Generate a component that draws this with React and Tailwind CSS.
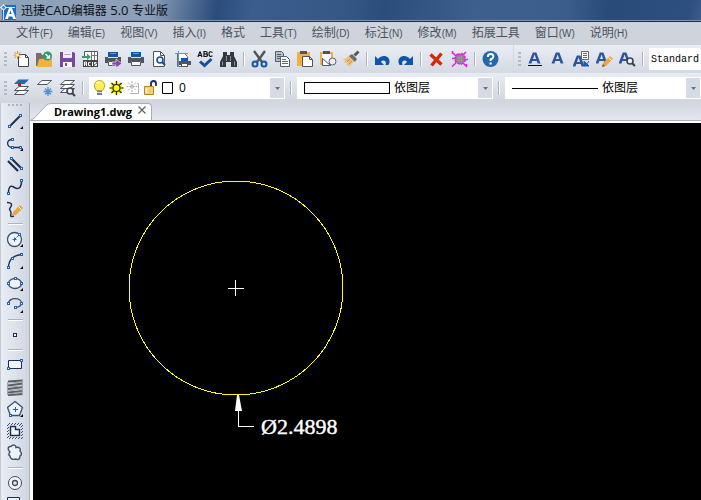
import React from "react";

const INK = "#1f2f4f";
const BLUE = "#1f66b8";

function Svg({ children, className = "" }) {
  return (
    <svg aria-hidden="true" width="17" height="18" viewBox="0 0 17 18" fill="none" className={`shrink-0 ${className}`}>
      {children}
    </svg>
  );
}

function Node({ x, y }) {
  return <rect x={x - 1} y={y - 1} width="2" height="2" fill="#fff" stroke={BLUE} shapeRendering="crispEdges" />;
}

const Flyout = () => <path d="M16 14v3h-3z" fill="#000" />;
const Glyph = ({ x = 0, y = 0 }) => (
  <path
    transform={`translate(${x} ${y})`}
    d="M1.500 13.500 5.800 2.500H9.400L13.500 13.500H10.600L9.800 11H5.300L4.500 13.500ZM6 8.900H9.100L7.600 4.600Z"
    fill="#2c56a0"
  />
);
const Pencil = () => (
  <g>
    <path d="M6 17l1-4 7-7 3 3-7 7z" fill="#f0a63c" />
    <path d="M12.500 7.500l3 3" stroke="#fff" />
    <path d="M6 17l1-3 2 2z" fill="#7a5a30" />
  </g>
);
const Printer = () => (
  <g>
    <path d="M3 2h10v5H3z" fill="#0f59a8" />
    <path d="M5 3.500h6" stroke="#5d96d0" />
    <path d="M0 7h3v1h10V7h3v6h-3v-2H3v2H0z" fill="#50545c" />
    <path d="M3.500 11.500h9v4h-9z" fill="#fff" stroke="#50545c" />
  </g>
);
const Loupe = ({ x, y, c = "#40444c" }) => (
  <g transform={`translate(${x} ${y})`}>
    <circle cx="4" cy="4" r="3" fill="#e8f1fa" stroke={c} strokeWidth="1.600" />
    <path d="M6.200 6.200L9 9" stroke={c} strokeWidth="2.200" />
  </g>
);

const FILE_TOOLS = [
  ["New", <>
    <path d="M5.500 9V4.500h7l3 3v9h-10V9" fill="#fff" stroke="#444" />
    <path d="M12.500 4.500v3h3" stroke="#444" />
    <path d="M4.500 1v8M.500 5h8M1.500 2l6 6M7.500 2l-6 6" stroke="#d99022" />
    <circle cx="4.500" cy="5" r="1.500" fill="#fff2b0" />
  </>],
  ["Open", <>
    <path d="M0 16V3h5l1 2h4v11z" fill="#767069" />
    <path d="M1 17l2-8h4l1-1h8v9z" fill="#f5b041" />
    <circle cx="11.500" cy="6" r="4.500" fill="#2a9c6c" />
    <path d="M9.500 4l4 4M13.500 5v3h-3" stroke="#fff" strokeWidth="1.300" />
  </>],
  ["Save", <>
    <path d="M1 2h13l2 1v14H1z" fill="#7a4a9a" />
    <path d="M4 2h9v6H4z" fill="#f3eef8" />
    <path d="M4 12h9v5H4z" fill="#fff" />
    <path d="M6 13h2v3H6z" fill="#7a4a9a" />
    <path d="M5.500 4.500h6" stroke="#b49ac6" />
  </>],
  ["Export ACIS", <>
    <path d="M2.500 6V1.500h13v14h-13V10" fill="#fff" stroke="#555" />
    <path d="M9.500 2v8M9.500 5.500h6M12.500 2v8" stroke="#777" />
    <path d="M0 6h5V3.500L9 7 5 10V8H0z" fill="#3c9a72" />
    <path d="M1 10h15v7H1z" fill="#444" />
    <path d="M2.500 16v-4h2v4M2.500 14h2M8.500 12.500h-2v3h2M10.500 12v4M14.500 12.500h-2v1.500h2v1.500h-2" stroke="#fff" />
  </>],
  ["Batch print", <>
    <Printer />
    <path d="M7 12h4V9l6 4.500-6 4.500v-3H7z" fill="#8b46a5" stroke="#fff" strokeWidth=".6" />
  </>],
  ["Print", <Printer />],
  ["Print preview", <>
    <path d="M2.500 1.500h7l4 4v11h-11z" fill="#fff" stroke="#555" />
    <path d="M9.500 1.500v4h4" stroke="#555" />
    <Loupe x={5} y={6} c="#1c4f96" />
  </>],
  ["Page setup", <>
    <path d="M3.500 3.500h7l3 3v10h-10z" fill="#fff" stroke="#666" />
    <path d="M1 3.500h13M4.500 1v16" stroke="#49a0c8" />
    <path d="M7 8h7v3H7z" fill="#0f59a8" />
    <path d="M5 11h12v4H5z" fill="#50545c" />
    <path d="M7.500 13.500h6v3h-6z" fill="#fff" stroke="#50545c" />
  </>],
  ["Spelling", <>
    <path d="M1 7l1.700-5h.6L5 7M1.700 5.500h2.600M7 1.500v5h1.500Q10.500 6.500 10.500 5.200 10.500 4 8.800 4 10.200 4 10.200 2.700 10.200 1.500 8.500 1.500zM7 4h2M15.500 2.500Q12 .5 12 4t3.500 1.800" stroke="#111" strokeWidth="1.200" />
    <path d="M3 11.500l4.500 4 7-6.500" stroke="#154f9f" strokeWidth="3" />
  </>],
  ["Find", <>
    <path d="M3 2h4v3h3V2h4v4l3 6v5h-6v-5H6v5H0v-5l3-6z" fill="#35383e" />
    <path d="M6.500 6v5M10.500 6v5M2.500 11.500v4M14.500 11.500v4" stroke="#8c9098" />
  </>],
];

const EDIT_TOOLS = [
  ["Cut", <>
    <path d="M3 1l8 11M14 1L6 12" stroke="#50545c" strokeWidth="2.400" />
    <circle cx="4" cy="14" r="2.500" stroke="#0f59a8" strokeWidth="2" />
    <circle cx="13" cy="14" r="2.500" stroke="#0f59a8" strokeWidth="2" />
  </>],
  ["Copy", <>
    <path d="M1.500 1.500h6l2 2v8h-8z" fill="#b7bec9" stroke="#555e6c" />
    <path d="M3 4.500h4M3 6.500h4M3 8.500h3" stroke="#555e6c" />
    <path d="M6.500 6.500h6l3 3v7h-9z" fill="#fff" stroke="#555e6c" />
    <path d="M8 9.500h4M8 11.500h6M8 13.500h6" stroke="#2574be" />
  </>],
  ["Paste", <>
    <path d="M0 2h13v14H0z" fill="#f4ae43" />
    <path d="M3 1h7v3H3z" fill="#50545c" />
    <path d="M5.500 6.500h7l3 3v7h-10z" fill="#fff" stroke="#555" />
    <path d="M12.500 6.500v3h3" stroke="#555" />
  </>],
  ["Paste as block", <>
    <path d="M0 2h13v13H0z" fill="#f4ae43" />
    <path d="M2 4h9v9H2z" fill="#f6f7fa" />
    <path d="M3 1h7v3H3z" fill="#50545c" />
    <circle cx="12.500" cy="11.500" r="3.500" fill="#e9eef8" stroke="#5a6272" />
    <path d="M2.500 15.500v-7l8 7z" fill="#fff" stroke="#3e5b8c" />
  </>],
  ["Match properties", <>
    <path d="M0 9.500l7-4 5 5-6 6.500-1-2-2 0 1-2-3 0 1-2z" fill="#f1c080" />
    <path d="M6 6l3-2 5 5-2 3z" fill="#6e6b68" />
    <path d="M11.500 5.500l4-4" stroke="#5c5a58" strokeWidth="3" />
    <path d="M6 14l3-3M4 11.500l3-2" stroke="#c08a48" />
  </>],
];

const HISTORY_TOOLS = [
  ["Undo", <path d="M1 6v9h9l-3.200-3.200C9 9.500 13 10 11.500 15l3 0C18.500 8 10 2.500 4 9z" fill="#0f55a6" />],
  ["Redo", <path d="M16 6v9H7l3.200-3.200C8 9.500 4 10 5.500 15l-3 0C-1.500 8 7 2.500 13 9z" fill="#0f55a6" />],
];

const ERASE_TOOLS = [
  ["Delete", <path d="M2.500 4.500l11 10M13.500 3.500l-10 12" stroke="#d42a0c" strokeWidth="3.400" />],
  ["Purge", <>
    <path d="M1 2l4 4M15 2l-3 3M12 13l4 4M5 13l-4 3.500M1 8.500h2M14 9.500h3M1.500 1v3M15.500 14v3" stroke="#e81ee0" strokeWidth="1.500" />
    <path d="M6 4.500l5-1 3 3.500v4l-4 3.500-5-2-1.500-4z" fill="#8a808c" stroke="#e81ee0" strokeWidth="1.500" strokeDasharray="3 1" />
    <path d="M6 8h6M6 10.500h6M8 6v7M10.500 6v7" stroke="#b09ab2" strokeWidth=".6" />
  </>],
];

const HELP_TOOLS = [
  ["Help", <>
    <circle cx="8.500" cy="9" r="8" fill="#2468a9" />
    <path d="M5.800 7q0-3 2.800-3t2.800 2.500Q11.400 8 8.600 9.500V11" stroke="#fff" strokeWidth="2" />
    <path d="M7.500 12.500h2.200v2H7.500z" fill="#fff" />
  </>],
];

const TEXT_TOOLS = [
  ["Single line text", <><Glyph /><path d="M1 15.500h14" stroke="#111" /></>],
  ["Multiline text", <Glyph />],
  ["Edit text", <>
    <Glyph x={-2} y={3} />
    <path d="M8.500 1.500h7v8h-7z" fill="#fff" stroke="#666" />
    <path d="M10 3.500h4M10 5.500h4M10 7.500h4" stroke="#666" />
    <path d="M11 11v5h5zM16 11l-3 4" fill="#1d5fae" stroke="#1d5fae" />
  </>],
  ["Text style", <><Glyph x={-2} /><Pencil /></>],
  ["Find text", <><Glyph x={-2} /><Loupe x={7} y={7} /></>],
];

const Sheet = ({ y, fill = "#fff" }) => (
  <path d={`M1.500 ${y + 4}.500L6 ${y}.500h9.500l-4.500 4z`} fill={fill} stroke="#50545c" />
);

const LAYER_TOOLS = [
  ["Layer manager", <>
    <Sheet y={11} /><Sheet y={7} />
    <path d="M1 5L5.500.500H16L11.500 5z" fill="#2968a6" />
    <path d="M5 4h3v3H5z" fill="#f00" />
  </>],
  ["Freeze layer", <>
    <Sheet y={1} />
    <path d="M12 8v9M7.500 12.500h9M9 9.500l6 6M15 9.500l-6 6" stroke="#5593ce" strokeWidth="1.400" />
  </>],
  ["Layer search", <>
    <Sheet y={9} /><Sheet y={5} /><Sheet y={1} />
    <Loupe x={7} y={8} />
  </>],
];

const DRAW_TOOLS = [
  [
    ["Line", <><path d="M2.500 14.500l11-11" stroke={INK} strokeWidth="2" /><Node x={2.5} y={14.5} /><Node x={13.5} y={3.5} /><Flyout /></>],
    ["Polyline", <><path d="M5.500 5.500C-1 5-1 13 5.500 13.500h8" stroke={INK} strokeWidth="1.300" /><Node x={5.500} y={5.500} /><Node x={5.500} y={13.500} /><Node x={13.500} y={13.500} /><Flyout /></>],
    ["Double line", <><path d="M4.500 2.500l10 10M1 5l10 10" stroke={INK} strokeWidth="2.200" /><Node x={4.500} y={2.500} /><Node x={14.500} y={12.500} /></>],
    ["Spline", <><path d="M1.500 15.500C1.500 6 5 8 7.500 9.500S14.500 12 14.500 2.500" stroke={INK} strokeWidth="1.500" /><Node x={1.500} y={15.500} /><Node x={14.500} y={2.500} /></>],
    ["Freehand", <><path d="M0 2.500C6 2.500 5 6 3 8s2 3 1 6 0 3 3 2" stroke={INK} strokeWidth="1.500" /><path d="M5 16l1-4 7-7 3 3-7 7z" fill="#f0a63c" /><path d="M11.500 6.500l3 3" stroke="#fff" /></>],
  ],
  [
    ["Circle", <><circle cx="7.500" cy="9.500" r="7" fill="#edf3fb" stroke="#40506b" strokeWidth="1.300" /><path d="M7.500 9.500l5-5" stroke={BLUE} strokeDasharray="2 1" /><path d="M5.500 9.500h4M7.500 7.500v4" stroke={BLUE} /><Node x={12.500} y={4.500} /><Flyout /></>],
    ["Arc", <><path d="M1.500 15.500Q1.500 4 14.500 2.500" stroke={INK} strokeWidth="1.300" /><Node x={1.500} y={15.500} /><Node x={5.500} y={6.500} /><Node x={14.500} y={2.500} /><Flyout /></>],
    ["Ellipse", <><ellipse cx="8" cy="9.500" rx="6.500" ry="5" fill="#edf3fb" stroke="#40506b" strokeWidth="1.300" /><Node x={8.500} y={4.500} /><Node x={1.500} y={9.500} /><Node x={14.500} y={9.500} /><Flyout /></>],
    ["Elliptical arc", <><path d="M1.500 7.500C1.500 1 14.500 1 14.500 7.500Q14 11 8.500 11.500" stroke="#40506b" strokeWidth="1.400" /><Node x={1.500} y={7.500} /><Node x={14.500} y={7.500} /><Node x={8.500} y={11.500} /><Flyout /></>],
  ],
  [["Point", <rect x="6.500" y="7.500" width="3" height="3" fill="#fff" stroke={INK} />]],
  [
    ["Rectangle", <><path d="M1.500 4.500h13v8h-13z" fill="#edf3fb" stroke={INK} /><Node x={1.500} y={12.500} /><Node x={14.500} y={4.500} /></>],
    ["Hatch lines", <><path d="M1 3.500l15-1M1 7.500l15-2M1 11l15-2M1 14.500l15-1.500M1 17l15-1" stroke="#5c5f63" strokeWidth="2.200" /><path d="M1 5l15-1M1 9l15-1M1 13l15-2M1 16l15-2M15.500 2v15M.5 4v13" stroke="#a3a5a8" /></>],
    ["Polygon", <><path d="M8 1.500l7.500 6-3 8H3.500l-3-8z" fill="#edf3fb" stroke="#40506b" strokeWidth="1.300" /><path d="M6 9.500h5M8.500 7v5" stroke={BLUE} /><Node x={3.500} y={15.500} /><Flyout /></>],
    ["Boundary", <>
      <path d="M0 4l3-3M0 7l6-6M0 10l9-9M0 13l12-12M0 16L15 1M2 17L16 3M5 17L16 6M8 17l8-8M11 17l5-5M14 17l2-2" stroke="#41506c" />
      <path d="M2 3h9l3 3v9H2z" fill="#e3e8f1" />
      <path d="M3.500 4.500h5v3h4v6h-9z" fill="#f4f7fc" stroke={INK} strokeWidth="1.500" />
    </>],
    ["Revision cloud", <path d="M3 8C0 5 1 2 4 2.500 6 0 9 1 9 3.500c3-1 5 1 4 3.500 2 2 2 4 0 5 0 4-3 4-4 3-3 1-6 0-6-3-2-1-1-3 0-4z" fill="#edf3fb" stroke="#40506b" strokeWidth="1.400" />],
  ],
  [
    ["Donut", <><circle cx="8" cy="9" r="6.500" fill="#f3f6fb" stroke="#444b57" /><circle cx="8" cy="9" r="2.500" fill="#e2e7f0" stroke="#444b57" strokeWidth="1.300" /></>],
    ["Wipeout", <path d="M.500 1.500h12v12H.500z" fill="#edf3fb" stroke={INK} />],
  ],
];

const MENUS = [
  ["文件", "(F)"], ["编辑", "(E)"], ["视图", "(V)"], ["插入", "(I)"], ["格式", ""], ["工具", "(T)"],
  ["绘制", "(D)"], ["标注", "(N)"], ["修改", "(M)"], ["拓展工具", ""], ["窗口", "(W)"], ["说明", "(H)"],
];

function ToolGroup({ tools }) {
  return tools.map(([name, art]) => (
    <button key={name} type="button" aria-label={name} className="flex h-[22px] w-[23px] shrink-0 items-center justify-center">
      <Svg>{art}</Svg>
    </button>
  ));
}

function Divider() {
  return (
    <div className="flex w-2 shrink-0 justify-center">
      <div className="h-[14px] w-[2px] border-r border-white bg-[#adb2bc]" />
    </div>
  );
}

function Grip() {
  return (
    <div className="ml-1 mr-[3px] flex shrink-0 flex-col gap-[2px]">
      {[0, 1, 2, 3].map((i) => <i key={i} className="h-[2px] w-[3px] bg-[#b4b9c3]" />)}
    </div>
  );
}

function Combo({ label, value, children }) {
  return (
    <div className="flex h-[22px] w-[196px] shrink-0 items-center bg-white">
      {children}
      <select aria-label={label} className="h-full min-w-0 flex-1 appearance-none bg-transparent text-[12px] text-black outline-none">
        <option>{value}</option>
      </select>
      <span className="mr-px flex h-5 w-[14px] shrink-0 items-center justify-center bg-[#d5dae4]">
        <svg aria-hidden="true" width="5" height="3" viewBox="0 0 5 3"><path d="M0 0h5L2.500 3z" fill="#6c717b" /></svg>
      </span>
    </div>
  );
}

function TitleBar() {
  return (
    <header className="flex h-[22px] shrink-0 items-center overflow-hidden border-b border-[#1c2c48] bg-[linear-gradient(100deg,#8fa3ba_0,#8c9fb7_150px,#4d6a91_190px,#2b4d7c_215px,#3b5d8e_250px,#355886_340px,#2a4d7b_380px,#3d608f_470px,#3b5d8b_560px,#284b79_600px,#2c4f80_680px,#44638f_701px)] shadow-[inset_0_-1px_0_#8396b0]">
      <svg aria-hidden="true" width="17" height="20" viewBox="0 0 17 20" className="shrink-0">
        <path d="M2 4h14v15H2z" fill="#1c6bc8" />
        <path d="M0 6.500h15M3.500 3v16" stroke="#d9ecff" />
        <circle cx="3.500" cy="6.500" r="2" fill="#3b86dc" stroke="#fff" />
        <path d="M5 18L9 7h3l4 11h-3l-.7-2.500H8.600L8 18zM9.200 13h2.500l-1.200-3.500z" fill="#fff" />
      </svg>
      <h1 className="ml-1 whitespace-nowrap text-[12px] leading-5 text-[#0a0f18]">
        迅捷<span className="text-[13px]">CAD</span>编辑器<span className="text-[13px]"> 5.0 </span>专业版
      </h1>
    </header>
  );
}

function MenuBar() {
  return (
    <nav className="flex h-[23px] shrink-0 items-center gap-[15px] bg-[#ced3dc] pl-4">
      {MENUS.map(([name, key]) => (
        <button key={name} type="button" className="shrink-0 whitespace-nowrap font-['Liberation_Sans','Noto_Sans_CJK_SC',sans-serif] text-[12px] leading-5 text-[#4c525d]">
          {name}<span className="text-[10px]">{key}</span>
        </button>
      ))}
    </nav>
  );
}

function MainToolbar() {
  return (
    <div className="flex h-[28px] shrink-0 items-center overflow-hidden bg-gradient-to-b from-[#eaedf4] to-[#d4d9e3]">
      <Grip />
      <ToolGroup tools={FILE_TOOLS} />
      <Divider />
      <ToolGroup tools={EDIT_TOOLS} />
      <Divider />
      <ToolGroup tools={HISTORY_TOOLS} />
      <Divider />
      <ToolGroup tools={ERASE_TOOLS} />
      <Divider />
      <ToolGroup tools={HELP_TOOLS} />
      <div className="h-full w-3 shrink-0 border-r border-[#d3d8e2]" />
      <Grip />
      <ToolGroup tools={TEXT_TOOLS} />
      <Divider />
      <select aria-label="Text style name" className="ml-[2px] h-[22px] min-w-[80px] flex-1 appearance-none bg-white pl-[2px] font-['Liberation_Mono',monospace] text-[10px] text-black outline-none">
        <option>Standard</option>
      </select>
    </div>
  );
}

function PropertyToolbar() {
  return (
    <div className="flex h-[30px] shrink-0 items-center overflow-hidden bg-gradient-to-b from-[#e8ecf4] to-[#d0d5de]">
      <Grip />
      <ToolGroup tools={LAYER_TOOLS} />
      <Divider />
      <div className="w-[2px] shrink-0" />
      <Combo label="Layer" value="0">
        <Svg className="ml-[2px]">
          <path d="M5.500 11.500C2 8 3 1.500 8.500 1.500s6.500 6.500 3 10z" fill="#ffee50" stroke="#bd9f22" />
          <path d="M6 4.500Q7 3 8.500 3" stroke="#fff" strokeWidth="1.500" />
          <path d="M6 12h5v4H6z" fill="#78808f" /><path d="M6 13.500h5" stroke="#d3d8df" />
        </Svg>
        <Svg>
          <path d="M8.500 1l2 3h3.500v3.500l2 1.500-2 1.500V14h-3.500l-2 3-2-3H3v-3.500L1 9l2-1.500V4h3.500z" fill="#ff0" />
          <path d="M8.500 2v3M8.500 13v3M1.500 9h3M12.500 9h3M3.500 4l2 2M11.500 12l2 2M13.500 4l-2 2M5.500 12l-2 2" stroke="#222" strokeWidth="1.200" />
          <circle cx="8.500" cy="9" r="3.500" fill="#ff0" stroke="#222" strokeWidth="1.200" />
        </Svg>
        <Svg>
          <path d="M12 4.500h1.500v10H5" stroke="#b4b4b4" />
          <path d="M7 2v11M1.500 7.500h11M3 3.500l8 8M11 3.500l-8 8" stroke="#a9a9a9" strokeDasharray="2 1" />
        </Svg>
        <Svg>
          <path d="M9 8V4.500Q9 2 11.500 2T14 4.500V7" stroke="#20246e" strokeWidth="1.800" />
          <path d="M2.500 7.500h9v8h-9z" fill="#f3cf72" stroke="#b68429" />
          <path d="M4.500 9v5" stroke="#fff3c3" strokeWidth="2" />
        </Svg>
        <Svg><path d="M3.500 3.500h10v11h-10z" fill="#fff" stroke="#000" /></Svg>
        <div className="w-[3px] shrink-0" />
      </Combo>
      <div className="mx-[2px] flex"><Divider /></div>
      <Combo label="Color" value="依图层">
        <div className="ml-[7px] mr-1 h-3 w-[86px] shrink-0 border border-black" />
      </Combo>
      <div className="mx-[2px] flex"><Divider /></div>
      <Combo label="Line type" value="依图层">
        <div className="ml-[7px] mr-1 h-px w-[86px] shrink-0 bg-black" />
      </Combo>
    </div>
  );
}

function DrawToolbar() {
  return (
    <aside className="flex w-[30px] shrink-0 flex-col items-center overflow-hidden border-l border-r border-l-[#c5cad4] border-r-[#a9aeb8] bg-gradient-to-r from-[#e9edf5] to-[#d0d6e1]">
      <div className="mb-[3px] mt-px flex h-[3px] shrink-0 gap-[2px]">
        {[0, 1, 2, 3].map((i) => <i key={i} className="h-[2px] w-[2px] bg-[#aeb3bd]" />)}
      </div>
      {DRAW_TOOLS.map((group, g) => (
        <React.Fragment key={g}>
          {g > 0 && (
            <div className="flex h-2 shrink-0 items-center">
              <div className="h-[2px] w-[15px] border-b border-white bg-[#adb2bc]" />
            </div>
          )}
          {group.map(([name, art]) => (
            <button key={name} type="button" aria-label={name} className="flex h-[22px] w-[23px] shrink-0 items-center justify-center">
              <Svg>{art}</Svg>
            </button>
          ))}
        </React.Fragment>
      ))}
    </aside>
  );
}

function TabStrip() {
  return (
    <div className="flex h-[18px] shrink-0 items-end border-b border-[#a9aeb8] bg-gradient-to-b from-[#d2d7e0] to-[#e3e7ef]">
      <svg aria-hidden="true" width="22" height="17" viewBox="0 0 22 17" className="shrink-0">
        <path d="M1 17Q3 16.500 5 14.500L16 2.500Q18 .5 22 .5V17z" fill="#fff" />
        <path d="M1 16.500Q3 16.500 5 14.500L16 2.500Q18 .5 22 .5" fill="none" stroke="#a9aeb8" />
      </svg>
      <div className="flex h-[17px] w-[100px] shrink-0 items-center justify-between rounded-tr-sm border-r border-t border-[#a9aeb8] bg-white pl-[2px] pr-[5px]">
        <span className="text-[11px] font-bold leading-4 text-black">Drawing1.dwg</span>
        <button type="button" aria-label="Close Drawing1.dwg" className="pb-1">
          <svg aria-hidden="true" width="8" height="8" viewBox="0 0 8 8" className="block"><path d="M.5.500l7 7M7.500.500l-7 7" stroke="#62666d" strokeWidth="1.300" /></svg>
        </button>
      </div>
    </div>
  );
}

function Drawing() {
  return (
    <div className="min-h-0 flex-1 overflow-hidden border-l-[3px] border-t-2 border-white bg-black">
      <svg role="img" aria-label="Circle with diameter dimension" width="668" height="377" viewBox="0 0 668 377" fill="none">
        <circle cx="203" cy="165" r="107" stroke="#ff0" shapeRendering="crispEdges" />
        <path d="M195 165.500h16M202.500 157v16" stroke="#fff" shapeRendering="crispEdges" />
        <path d="M205.500 280v23.500H221" stroke="#fff" shapeRendering="crispEdges" />
        <path d="M204 272h2l3 16h-7z" fill="#fff" />
        <text x="228" y="311" fill="#fff" stroke="#fff" strokeWidth=".4" fontSize="22" fontFamily="'Liberation Serif', serif">Ø2.4898</text>
      </svg>
    </div>
  );
}

export default function App() {
  return (
    <div className="flex h-screen flex-col overflow-hidden bg-[#d0d5de] font-['Open_Sans','Noto_Sans_CJK_SC',sans-serif]">
      <TitleBar />
      <MenuBar />
      <MainToolbar />
      <PropertyToolbar />
      <div className="flex min-h-0 flex-1">
        <DrawToolbar />
        <main className="flex min-w-0 flex-1 flex-col">
          <TabStrip />
          <Drawing />
        </main>
      </div>
    </div>
  );
}
